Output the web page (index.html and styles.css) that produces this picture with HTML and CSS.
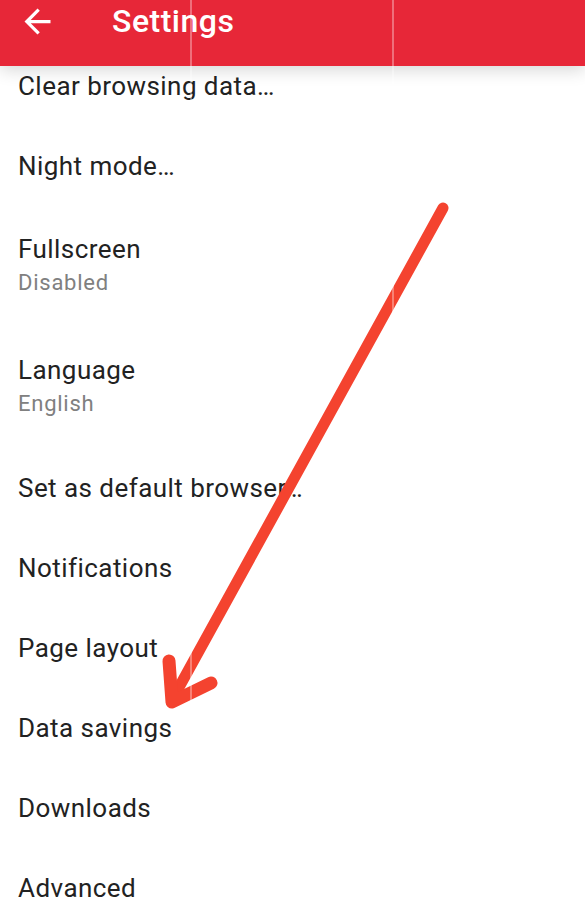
FILE: index.html
```html
<!DOCTYPE html>
<html lang="en">
<head>
<meta charset="utf-8">
<title>Settings</title>
<link rel="stylesheet" href="styles.css">
</head>
<body>
<div class="screen">
  <header class="toolbar">
    <svg class="back" viewBox="0 0 24 24" width="39" height="39" aria-hidden="true">
      <path d="M20 11H7.83l5.59-5.59L12 4l-8 8 8 8 1.41-1.41L7.83 13H20v-2z" fill="#fff"/>
    </svg>
    <h1 class="title">Settings</h1>
  </header>
  <ul class="list">
    <li class="row row-first"><span class="label">Clear browsing data…</span></li>
    <li class="row"><span class="label">Night mode…</span></li>
    <li class="row row-two"><span class="label">Fullscreen</span><span class="sub">Disabled</span></li>
    <li class="row row-two"><span class="label">Language</span><span class="sub">English</span></li>
    <li class="row"><span class="label">Set as default browser…</span></li>
    <li class="row"><span class="label">Notifications</span></li>
    <li class="row"><span class="label">Page layout</span></li>
    <li class="row"><span class="label">Data savings</span></li>
    <li class="row"><span class="label">Downloads</span></li>
    <li class="row"><span class="label">Advanced</span></li>
  </ul>
  <svg class="annot" width="585" height="917" viewBox="0 0 585 917" aria-hidden="true">
    <path d="M443 208 L172 700" stroke="#f4432f" stroke-width="11" stroke-linecap="round" fill="none"/>
    <path d="M169 661 L172 702 L211 683" stroke="#f4432f" stroke-width="13" stroke-linecap="round" stroke-linejoin="round" fill="none"/>
    <line x1="191" y1="0" x2="191" y2="917" class="seam"/>
    <line x1="393" y1="0" x2="393" y2="917" class="seam"/>
  </svg>
</div>
</body>
</html>
```
FILE: styles.css
```css
html, body {
  margin: 0;
  padding: 0;
  background: #fff;
}
body {
  font-family: Roboto, "Noto Sans", "Liberation Sans", sans-serif;
  overflow: hidden;
}
.screen {
  position: relative;
  width: 585px;
  height: 917px;
  overflow: hidden;
}
.toolbar {
  position: relative;
  z-index: 2;
  display: flex;
  align-items: center;
  box-sizing: border-box;
  height: 66px;
  padding: 0 0 24px 18px;
  background: #e72738;
  box-shadow: 0 4px 16px rgba(0, 0, 0, 0.16);
}
.back {
  flex: none;
  display: block;
}
.title {
  margin: 0 0 0 55px;
  font-size: 32px;
  line-height: 38px;
  font-weight: 500;
  letter-spacing: 0.5px;
  color: #fff;
}
.list {
  list-style: none;
  margin: 0;
  padding: 0;
}
.row {
  display: flex;
  flex-direction: column;
  padding: 25px 0 25px 18px;
}
.row-first {
  padding-top: 4.5px;
}
.row-two {
  padding-top: 28.5px;
  padding-bottom: 30.5px;
}
.label {
  font-size: 26px;
  line-height: 30px;
  letter-spacing: 0.45px;
  color: #222;
}
.sub {
  margin-top: 6px;
  font-size: 22px;
  line-height: 26px;
  letter-spacing: 0.75px;
  color: #808080;
}
.annot {
  position: absolute;
  left: 0;
  top: 0;
  z-index: 3;
  pointer-events: none;
}
.seam {
  stroke: rgba(255, 255, 255, 0.45);
  stroke-width: 1.5;
}
```
